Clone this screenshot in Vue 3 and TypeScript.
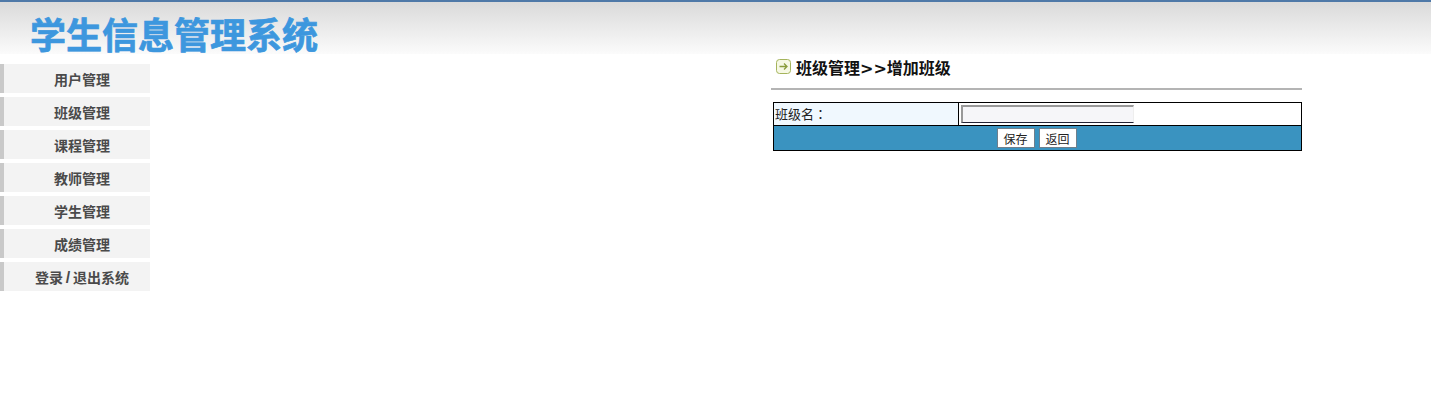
<template>
  <div class="page">
    <header class="top">
      <h1>学生信息管理系统</h1>
    </header>
    <div class="body-row">
      <nav class="menu">
        <a v-for="item in menu" :key="item" class="menu-item">
          <template v-for="(part, i) in item.split('/')" :key="part"><span v-if="i > 0" class="slash">/</span>{{ part }}</template>
        </a>
      </nav>
      <main class="content">
        <div class="heading">
          <svg class="arrow" width="15" height="15" viewBox="0 0 15 15">
            <rect x="0.5" y="0.5" width="14" height="14" rx="3" fill="#f6f8e4" stroke="#a5b45c" />
            <path d="M3.5 7.5H11M8 4.5l3 3-3 3" fill="none" stroke="#8a9c3c" stroke-width="1.3" />
          </svg>
          <span>班级管理&gt;&gt;增加班级</span>
        </div>
        <hr class="rule" />
        <table class="form">
          <tbody>
            <tr>
              <td class="label">班级名<span class="colon">：</span></td>
              <td class="field"><input type="text" class="text-input" /></td>
            </tr>
            <tr>
              <td colspan="2" class="actions">
                <button type="button">保存</button>
                <button type="button">返回</button>
              </td>
            </tr>
          </tbody>
        </table>
      </main>
    </div>
  </div>
</template>

<script setup lang="ts">
const menu: string[] = [
  '用户管理',
  '班级管理',
  '课程管理',
  '教师管理',
  '学生管理',
  '成绩管理',
  '登录/退出系统',
]
</script>

<style>
html,
body {
  margin: 0;
  background: #fff;
}
</style>

<style scoped>
.page {
  font-family: "Liberation Sans", "Noto Sans CJK SC", sans-serif;
  height: 418px;
  overflow: hidden;
}

.top {
  height: 52px;
  border-top: 2px solid #4f79a8;
  background: linear-gradient(#dadada, #fbfbfb);
}

.top h1 {
  margin: 0 0 0 30px;
  padding-top: 18px;
  font-size: 36px;
  line-height: 34px;
  font-weight: 700;
  color: #3d97de;
  -webkit-text-stroke: 0.7px #3d97de;
}

.body-row {
  display: flex;
}

.menu {
  width: 150px;
  padding-top: 10px;
  display: flex;
  flex-direction: column;
  gap: 4px;
}

.menu-item {
  box-sizing: border-box;
  height: 29px;
  line-height: 32px;
  border-left: 4px solid #c9c9c9;
  background: #f3f3f3;
  color: #4a4a4a;
  font-size: 14px;
  font-weight: 700;
  text-align: center;
  padding-left: 10px;
  white-space: nowrap;
}

.slash {
  display: inline-block;
  width: 10px;
  font-size: 16px;
  line-height: 1;
}

.content {
  width: 531px;
  margin-left: 621px;
}

.heading {
  display: flex;
  align-items: center;
  gap: 5px;
  height: 25px;
  padding: 0 0 2px 5px;
  font-family: "DejaVu Sans", "Noto Sans CJK SC", sans-serif;
  font-size: 16px;
  font-weight: 700;
  color: #111;
}

.rule {
  margin: 7px 0 0;
  border: 0;
  height: 2px;
  background: #b4b4b4;
}

.form {
  margin: 12px 0 0 2px;
  width: 529px;
  border-collapse: collapse;
  font-size: 13px;
  color: #222;
}

.form td {
  border: 1px solid #000;
  padding: 0;
}

.label {
  width: 185px;
  height: 23px;
  padding: 0 0 2px 1px !important;
  background: #f0f8fe;
  box-sizing: border-box;
}

.colon {
  font-family: "Noto Sans CJK TC", sans-serif;
}

.field {
  padding-left: 2px !important;
  font-size: 0;
}

.text-input {
  box-sizing: border-box;
  width: 173px;
  height: 18px;
  padding: 0;
  border-style: solid;
  border-width: 2px 1px 1px 2px;
  border-color: #999 #eee #223 #999;
  background: #f6f6f9;
}

.actions {
  height: 24px;
  background: #3a93c0;
  text-align: center;
  font-size: 0;
  padding-right: 2px !important;
}

.actions button {
  box-sizing: border-box;
  width: 38px;
  height: 20px;
  margin: 0 2px;
  padding: 0;
  border: 1px solid #6f7f8c;
  background: #fff;
  color: #222;
  font-family: inherit;
  font-size: 12px;
}
</style>
